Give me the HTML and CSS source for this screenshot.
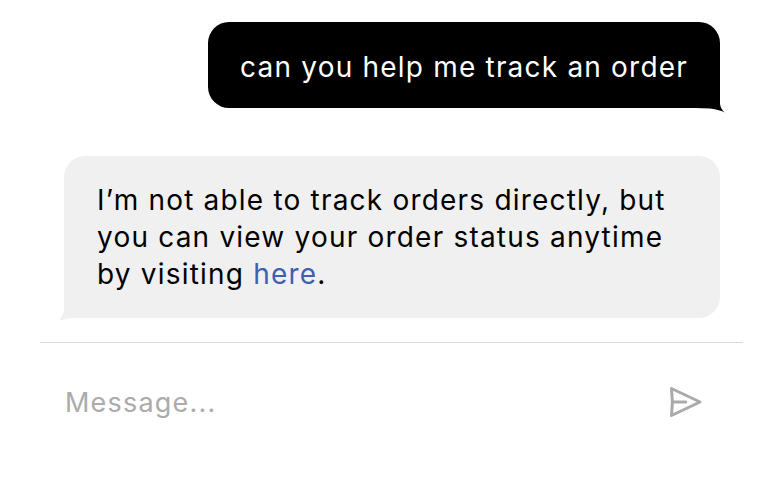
FILE: index.html
```html
<!DOCTYPE html>
<html lang="en">
<head>
<meta charset="utf-8">
<title>Chat</title>
<link rel="stylesheet" href="styles.css">
</head>
<body>
<main class="chat">
  <section class="messages">
    <div class="bubble bubble-user">
      can you help me track an order
      <svg class="tail tail-right" width="30" height="30" viewBox="-25 -25 30 30" aria-hidden="true"><path d="M0,-25 L0,-4 Q1,2 5,4.5 Q0,2 -10,0.6 L-25,0 Z" fill="#000"/></svg>
    </div>
    <div class="bubble bubble-bot">
      I’m not able to track orders directly, but you can view your order status anytime by visiting <a class="link" href="#">here</a>.
      <svg class="tail tail-left" width="30" height="30" viewBox="-5 -25 30 30" aria-hidden="true"><path d="M0,-25 L0,-8 Q-1,-1 -6,3 Q0,0.5 10,0 L25,0 Z" fill="#f0f0f0"/></svg>
    </div>
  </section>
  <form class="composer" onsubmit="return false">
    <input class="composer-input" type="text" placeholder="Message...">
    <button class="send" type="button" aria-label="Send">
      <svg width="36" height="36" viewBox="0 0 24 24" fill="none" stroke="#aaaaaa" stroke-width="2" stroke-linecap="round" stroke-linejoin="round">
        <path d="M3 3 L22 12 L3 21 Q4.2 12 3 3 Z"/>
        <path d="M3.6 12 H12.5"/>
      </svg>
    </button>
  </form>
</main>
</body>
</html>
```
FILE: styles.css
```css
* { box-sizing: border-box; }
html, body { margin: 0; padding: 0; background: #ffffff; }
body {
  font-family: "Inter", "Noto Sans", "Liberation Sans", sans-serif;
  color: #000;
}
.chat {
  width: 703px;
  margin-left: 40px;
}
.messages {
  display: flex;
  flex-direction: column;
  gap: 48px;
  padding: 22px 23px 24px 24px;
}
.bubble {
  position: relative;
  font-size: 28px;
  line-height: 37px;
  letter-spacing: 1.2px;
  border-radius: 21px;
}
.bubble-user {
  align-self: flex-end;
  background: #000;
  color: #fff;
  padding: 27px 32px 22px 32px;
  white-space: nowrap;
}
.bubble-bot {
  align-self: flex-start;
  width: 656px;
  background: #f0f0f0;
  padding: 26px 40px 25px 33px;
}
.link {
  color: #3f5fb0;
  text-decoration: none;
}
.tail {
  position: absolute;
  display: block;
}
.tail-right { right: -5px; bottom: -5px; }
.tail-left { left: -5px; bottom: -5px; }
.composer {
  display: flex;
  align-items: center;
  justify-content: space-between;
  height: 110px;
  margin: 0;
  padding: 9px 40px 0 25px;
  border-top: 1px solid #d9d9d9;
  border-radius: 0 0 20px 20px;
  box-shadow: 0 1px 1px rgba(0, 0, 0, 0.02);
}
.composer-input {
  flex: 1;
  border: none;
  outline: none;
  background: transparent;
  font-family: "Inter", "Noto Sans", "Liberation Sans", sans-serif;
  font-size: 27px;
  letter-spacing: 1.2px;
  color: #333;
  padding: 0;
}
.composer-input::placeholder { color: #ababab; }
.send {
  border: none;
  background: transparent;
  padding: 0;
  display: flex;
  cursor: pointer;
}
```
